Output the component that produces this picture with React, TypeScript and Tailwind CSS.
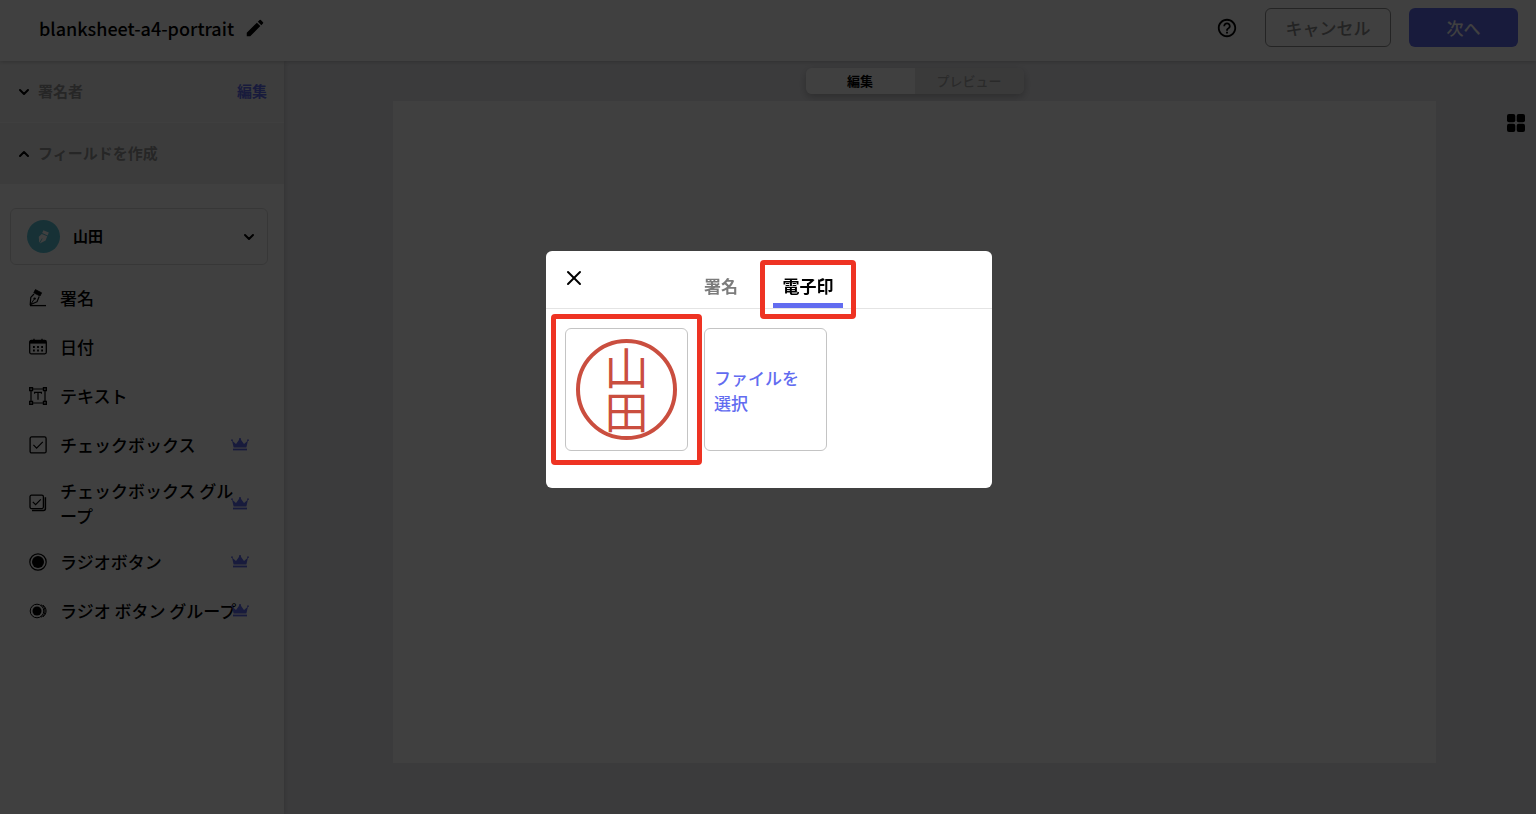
import React, { useState } from "react";
import { ChevronDown, ChevronUp, X } from "lucide-react";
import { MdEdit, MdHelpOutline } from "react-icons/md";
import clsx from "clsx";

const SignatureIcon = () => (
  <svg viewBox="0 0 18 18" className="size-[18px]" fill="none" stroke="currentColor">
    <path d="M6.4 0.6 12.6 3.8 11 7 4.8 3.8Z" fill="currentColor" strokeWidth="0.8" />
    <path d="M5 5 1.8 8.4 1.2 15.8 8 12.8 10.2 7.6" strokeWidth="1.2" strokeLinejoin="round" />
    <path d="M1.6 15.6 5 10.4" strokeWidth="1" />
    <circle cx="5.6" cy="9.6" r="1.2" fill="currentColor" stroke="none" />
    <path d="M1 16.6h16" strokeWidth="1.3" />
  </svg>
);

const CalendarIcon = () => (
  <svg viewBox="0 0 18 18" className="size-[18px]" fill="none" stroke="currentColor">
    <rect x="0.7" y="2.5" width="16.6" height="13.3" rx="1.5" strokeWidth="1.3" />
    <path d="M1 2.6h16v3H1z" fill="currentColor" stroke="none" />
    <path d="M5 0.8v2M13 0.8v2" strokeWidth="1.3" />
    <path d="M4 9h1.8M8.1 9h1.8M12.2 9H14M4 12.5h1.8M8.1 12.5h1.8M12.2 12.5H14" strokeWidth="1.8" />
  </svg>
);

const TextIcon = () => (
  <svg viewBox="0 0 18 18" className="size-[18px]" fill="none" stroke="currentColor">
    <path d="M4 2h10M4 16h10M2 4v10M16 4v10" strokeWidth="1.2" />
    <path d="M0.7.7h2.8v2.8H.7zM14.5.7h2.8v2.8h-2.8zM.7 14.5h2.8v2.8H.7zM14.5 14.5h2.8v2.8h-2.8z" strokeWidth="1.4" />
    <path d="M5.6 6.8V5.3h6.8v1.5M9 5.3v7.4" strokeWidth="1.2" />
  </svg>
);

const CheckboxIcon = () => (
  <svg viewBox="0 0 18 18" className="size-[18px]" fill="none" stroke="currentColor">
    <rect x="1.1" y="0.9" width="16" height="16" rx="1.5" strokeWidth="1.3" />
    <path d="m4.4 8.9 3.2 3.2 6.2-6.2" strokeWidth="1.2" />
  </svg>
);

const CheckboxGroupIcon = () => (
  <svg viewBox="0 0 18 18" className="size-[18px]" fill="none" stroke="currentColor">
    <rect x="1" y="1.2" width="13.4" height="13.4" rx="1.5" strokeWidth="1.3" />
    <path d="m3.8 7.8 2.8 2.8 5.2-5.2" strokeWidth="1.2" />
    <path d="M3 16.4h11.4a2 2 0 0 0 2-2V3.2" strokeWidth="1.5" />
  </svg>
);

const RadioIcon = () => (
  <svg viewBox="0 0 18 18" className="size-[18px]" fill="none" stroke="currentColor">
    <circle cx="9" cy="9" r="8.2" strokeWidth="1.2" />
    <circle cx="9" cy="9" r="6" fill="currentColor" stroke="none" />
  </svg>
);

const RadioGroupIcon = () => (
  <svg viewBox="0 0 18 18" className="size-[18px]" fill="none" stroke="currentColor">
    <circle cx="8" cy="9" r="6.8" strokeWidth="1" />
    <circle cx="8" cy="9" r="4.5" fill="currentColor" stroke="none" />
    <path d="M12 2.8a6.8 6.8 0 0 1 0 12.4M14 3.2a7 7 0 0 1 0 11.6" strokeWidth="1" />
  </svg>
);

const CrownIcon = () => (
  <svg viewBox="0 0 18 13" className="h-[13px] w-[18px]" fill="#626cf0">
    <path d="M1 2.6 5 6 9 0.4 13 6 17 2.6 15.4 9.4H2.6Z" />
    <circle cx="1" cy="2.2" r="0.9" />
    <circle cx="17" cy="2.2" r="0.9" />
    <circle cx="9" cy="1.2" r="1.1" />
    <path d="M2 10.6h14v1.8H2z" />
  </svg>
);

const NibIcon = () => (
  <svg viewBox="0 0 12 14" className="h-[14px] w-3" fill="#ffffff">
    <path d="M5.4.3 10.8 2.6 9.6 5.4 4.2 3.1Z" />
    <path d="M3.8 4 9.2 6.3 7.6 10.6 1.8 13.6 4.6 8.6 4 8.2 1.2 12.8.8 6.8Z" />
  </svg>
);

const GridIcon = () => (
  <svg viewBox="0 0 18 18" className="size-[18px]" fill="currentColor">
    <rect width="8.3" height="8.3" rx="2" />
    <rect x="9.7" width="8.3" height="8.3" rx="2" />
    <rect y="9.7" width="8.3" height="8.3" rx="2" />
    <rect x="9.7" y="9.7" width="8.3" height="8.3" rx="2" />
  </svg>
);

interface IField {
  label: string;
  icon: React.ReactNode;
  premium?: boolean;
}

const fields: IField[] = [
  { label: "署名", icon: <SignatureIcon /> },
  { label: "日付", icon: <CalendarIcon /> },
  { label: "テキスト", icon: <TextIcon /> },
  { label: "チェックボックス", icon: <CheckboxIcon />, premium: true },
  { label: "チェックボックス グループ", icon: <CheckboxGroupIcon />, premium: true },
  { label: "ラジオボタン", icon: <RadioIcon />, premium: true },
  { label: "ラジオ ボタン グループ", icon: <RadioGroupIcon />, premium: true },
];

const Header = () => (
  <header className="relative z-10 flex h-[61px] items-center bg-white pr-[18px] pb-[6px] pl-[39px] shadow-[0_1px_4px_rgba(0,0,0,0.2)]">
    <h1 className="text-lg font-medium">blanksheet-a4-portrait</h1>
    <button aria-label="名前を編集" className="ml-[10px]">
      <MdEdit className="size-[22px]" />
    </button>
    <button aria-label="ヘルプ" className="ml-auto">
      <MdHelpOutline className="size-[22px]" />
    </button>
    <button className="ml-[27px] h-[39px] w-[126px] rounded-md border border-[#909090] text-[17px] font-medium text-[#8c8c8c]">
      キャンセル
    </button>
    <button className="ml-[18px] h-[39px] w-[109px] rounded-md bg-[#626cf0] text-[17px] font-medium text-white">
      次へ
    </button>
  </header>
);

const Sidebar = () => (
  <aside className="w-[284px] shrink-0 bg-white shadow-[1px_0_5px_rgba(0,0,0,0.15)]">
    <div className="flex h-[62px] items-center border-b border-[#fafafa] bg-[#f3f3f3] pr-[17px] pl-4 text-[15px] font-bold">
      <button className="flex items-center gap-[6px] text-[#989898]">
        <ChevronDown className="size-4 text-black" strokeWidth={3} />
        署名者
      </button>
      <a href="#signers" className="ml-auto text-[#626cf0]">
        編集
      </a>
    </div>
    <div className="flex h-[61px] items-center bg-[#f0f0f0] px-4 text-[15px] font-bold">
      <button className="flex items-center gap-[6px] text-[#989898]">
        <ChevronUp className="size-4 text-black" strokeWidth={3} />
        フィールドを作成
      </button>
    </div>
    <button className="mt-6 ml-[10px] flex h-[57px] w-[258px] items-center rounded-md border border-[#dcdcdc] pr-[10px] pl-4">
      <span className="flex size-[33px] items-center justify-center rounded-full bg-[#5cc4d8]">
        <NibIcon />
      </span>
      <span className="ml-[13px] text-[15px] font-bold">山田</span>
      <ChevronDown className="ml-auto size-4" strokeWidth={3} />
    </button>
    <ul className="mt-2">
      {fields.map((field) => (
        <li key={field.label}>
          <button className="flex min-h-[49px] w-full items-center py-[9px] pl-[29px] text-left">
            {field.icon}
            <span className="ml-[13px] w-[180px] text-[17px] leading-[25px] font-medium">{field.label}</span>
            {field.premium && (
              <span className="-ml-[9px]">
                <CrownIcon />
              </span>
            )}
          </button>
        </li>
      ))}
    </ul>
  </aside>
);

const StampDialog = () => {
  const [tab, setTab] = useState<string>("STAMP");

  return (
    <div className="fixed inset-0 z-20 flex items-start justify-center bg-black/75 pt-[251px] pl-[2px]">
      <div role="dialog" aria-label="電子印" className="w-[446px] rounded-md bg-white pb-[37px]">
        <div className="relative flex h-[58px] items-end justify-center border-b border-[#e4e4e4] pr-[9px]">
          <button aria-label="閉じる" className="absolute top-[15px] left-4">
            <X className="size-6" strokeWidth={2} />
          </button>
          <div role="tablist" className="flex gap-[17px] text-[17px]">
            <button
              role="tab"
              aria-selected={tab === "SIGN"}
              className={clsx("h-11 w-[70px] border-b-[5px] pt-1 font-bold", tab === "SIGN" ? "border-[#626cf0]" : "border-transparent text-[#7c7c7c]")}
              onClick={() => setTab("SIGN")}
            >
              署名
            </button>
            <div className="relative">
              <button
                role="tab"
                aria-selected={tab === "STAMP"}
                className={clsx("h-11 w-[70px] border-b-[5px] pt-1 font-bold", tab === "STAMP" ? "border-[#626cf0]" : "border-transparent text-[#7c7c7c]")}
                onClick={() => setTab("STAMP")}
              >
                電子印
              </button>
              <span className="pointer-events-none absolute -inset-x-[13px] -top-1 -bottom-[11px] rounded-sm border-[5px] border-[#ee3323]" />
            </div>
          </div>
        </div>
        <div className="flex gap-4 px-[19px] pt-[19px]">
          <button className="relative flex size-[123px] items-center justify-center rounded-md border border-[#c4c4c4]">
            <span className="flex size-[101px] items-center justify-center rounded-full border-4 border-[#ca4e3f] text-[44px] leading-none text-[#ca4e3f]">
              <span className="[writing-mode:vertical-rl]">山田</span>
            </span>
            <span className="pointer-events-none absolute -inset-[15px] rounded-sm border-[5px] border-[#ee3323]" />
          </button>
          <button className="size-[123px] rounded-md border border-[#c4c4c4] px-[9px] text-left text-[17px] leading-[25px] font-medium text-[#626cf0]">
            ファイルを
            <br />
            選択
          </button>
        </div>
      </div>
    </div>
  );
};

export default function App() {
  return (
    <div
      lang="ja"
      className="flex min-h-screen flex-col bg-[#ececf0] font-['Noto_Sans_CJK_JP',sans-serif] text-black"
    >
      <Header />
      <div className="flex flex-1">
        <Sidebar />
        <main className="flex flex-1 pl-[109px]">
          <div className="flex flex-1 flex-col pb-[51px]">
            <div className="mx-auto my-[7px] flex h-[26px] w-[218px] rounded-md text-[13px] shadow-[0_3px_8px_rgba(0,0,0,0.25)]">
              <button className="w-1/2 rounded-l-md bg-white font-bold">編集</button>
              <button className="w-1/2 rounded-r-md bg-[#e8e8e8] font-medium text-[#a8a8a8]">プレビュー</button>
            </div>
            <div className="flex-1 bg-white" />
          </div>
          <div className="flex w-[100px] items-start justify-end pt-[53px] pr-[11px]">
            <button aria-label="ページ一覧">
              <GridIcon />
            </button>
          </div>
        </main>
      </div>
      <StampDialog />
    </div>
  );
}
